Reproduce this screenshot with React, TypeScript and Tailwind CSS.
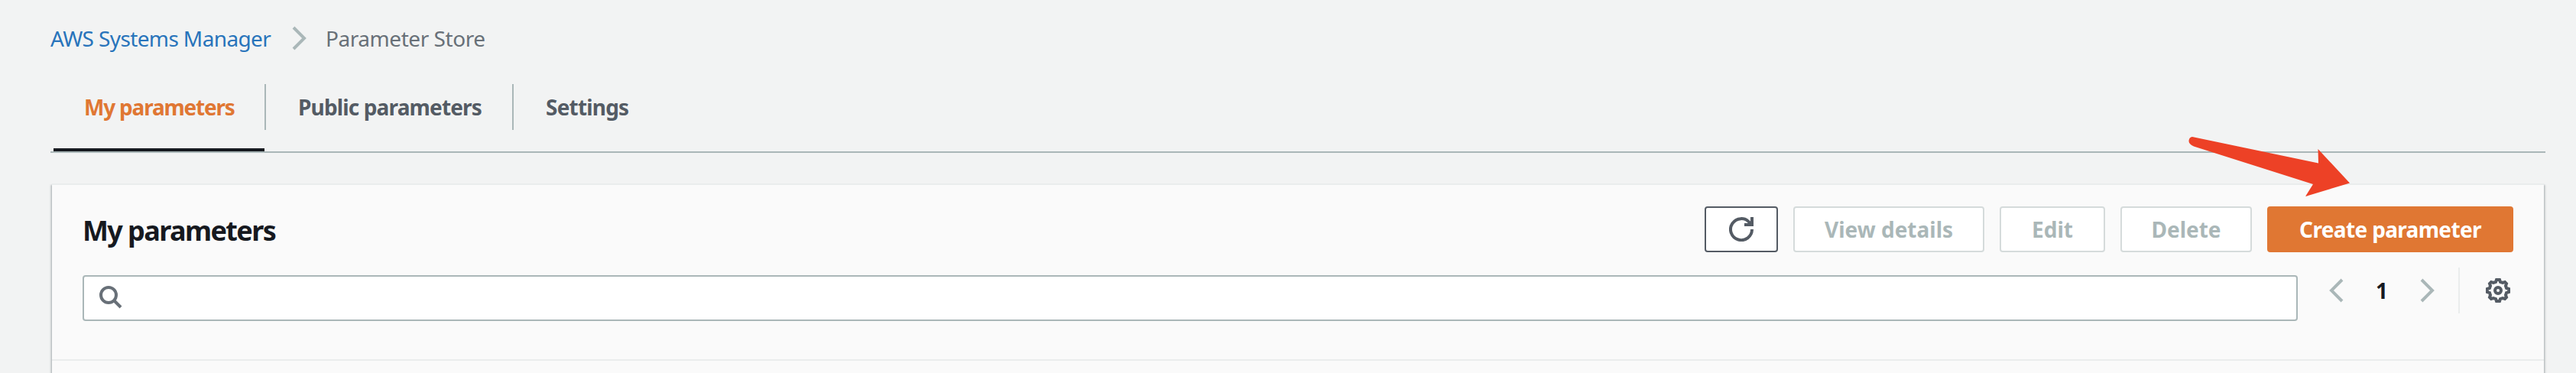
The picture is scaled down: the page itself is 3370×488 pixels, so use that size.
import type { ReactNode } from "react";

function Chevron({ left = false, className = "" }: { left?: boolean; className?: string }) {
  return (
    <svg viewBox="0 0 32 32" className={`size-8 shrink-0 ${className}`} fill="none" stroke="#aab7b8" strokeWidth="4">
      <path d={left ? "M23 2 9 16l14 14" : "M9 2l14 14L9 30"} />
    </svg>
  );
}

function Action({ className, children }: { className: string; children: ReactNode }) {
  return (
    <button className={`flex h-[60px] shrink-0 items-center justify-center rounded-[4px] border-2 text-[28px] leading-[40px] font-bold whitespace-nowrap ${className}`}>
      {children}
    </button>
  );
}

const disabled = "border-[#d5dbdb] bg-white text-[#aab7b8]";

export default function App() {
  return (
    <div className="relative h-[488px] w-[3370px] overflow-hidden bg-[#f2f3f3] font-['Noto_Sans',sans-serif]">
      <nav className="flex h-[110px] items-start pt-[30px] pl-[66px] text-[28px] leading-[40px]">
        <a className="w-[289px] shrink-0 tracking-[-0.62px] whitespace-nowrap text-[#2874bb]">AWS Systems Manager</a>
        <Chevron className="mt-1 ml-[20px]" />
        <span className="ml-[19px] tracking-[-0.45px] whitespace-nowrap text-[#687078]">Parameter Store</span>
      </nav>

      <div className="ml-[66px] flex h-[90px] w-[3264px] border-b-2 border-[#aab7b8] text-[28px] leading-[40px] font-bold whitespace-nowrap text-[#545b64]">
        <div className="ml-1 h-[88px] w-[276px] border-b-4 border-[#16191f] pt-[10px] pl-10 tracking-[-1.2px] text-[#e07733]">My parameters</div>
        <div className="h-[60px] w-[326px] border-x-2 border-[#aab7b8] pt-[10px] pl-[42px] tracking-[-0.85px]">Public parameters</div>
        <div className="pt-[10px] pl-[42px] tracking-[-0.8px]">Settings</div>
      </div>

      <main className="mt-10 ml-[68px] h-[260px] w-[3260px] border-t-2 border-[#eaeded] bg-[#fafafa] shadow-[0_2px_2px_0_rgba(0,28,36,0.3),2px_2px_2px_0_rgba(0,28,36,0.15),-2px_2px_2px_0_rgba(0,28,36,0.15)]">
        <header className="h-[230px] border-b-2 border-[#eaeded] px-10 pt-7">
          <div className="flex h-[60px] items-center">
            <h1 className="flex-1 pt-[3px] text-[36px] leading-[44px] font-bold tracking-[-1.6px] text-[#16191f]">My parameters</h1>
            <div className="flex gap-5">
              <Action className="w-[96px] border-[#545b64] bg-white text-[#545b64]">
                <svg viewBox="0 0 16 16" className="size-8" fill="none" stroke="currentColor" strokeWidth="2">
                  <path d="M15 8a7 7 0 1 1-1.6-4.4L15 5" />
                  <path d="M10 5h5V0" />
                </svg>
              </Action>
              <Action className={`w-[250px] ${disabled}`}>View details</Action>
              <Action className={`w-[138px] ${disabled}`}>Edit</Action>
              <Action className={`w-[172px] ${disabled}`}>Delete</Action>
              <Action className="w-[322px] border-[#e07733] bg-[#e07733] tracking-[-0.65px] text-white">Create parameter</Action>
            </div>
          </div>
          <div className="flex pt-5">
            <div className="mt-[10px] flex h-[60px] w-[2898px] items-center rounded-[4px] border-2 border-[#aab7b8] bg-white pl-5">
              <svg viewBox="0 0 32 32" className="size-8" fill="none" stroke="#687078" strokeWidth="4">
                <circle cx="12" cy="12" r="10" />
                <path d="m19 19 9 9" />
              </svg>
            </div>
            <div className="flex h-[60px] items-center">
              <Chevron left className="ml-[35px]" />
              <span className="w-[86px] text-center text-[28px] leading-[40px] font-bold text-[#16191f]">1</span>
              <Chevron />
              <div className="ml-[25px] h-[60px] w-[2px] bg-[#eaeded]" />
              <svg viewBox="0 0 32 32" className="ml-[34px] size-8" fill="none" stroke="#545b64" strokeWidth="4">
                <circle cx="16" cy="16" r="4" />
                <path d="M14 2h4l1 3 3 1 3-1 2 2-1 3 1 3 3 1v4l-3 1-1 3 1 3-2 2-3-1-3 1-1 3h-4l-1-3-3-1-3 1-2-2 1-3-1-3-3-1v-4l3-1 1-3-1-3 2-2 3 1 3-1z" />
              </svg>
            </div>
          </div>
        </header>
      </main>

      <svg viewBox="0 0 220 84" className="absolute top-[176px] left-[2860px] h-[84px] w-[220px]" fill="#ed4126">
        <path d="M8 3 173 37.5 172.500 19 214 63.500 156 81 166 65 10 15.500Q3 12.500 3.500 8T8 3Z" />
      </svg>
    </div>
  );
}
